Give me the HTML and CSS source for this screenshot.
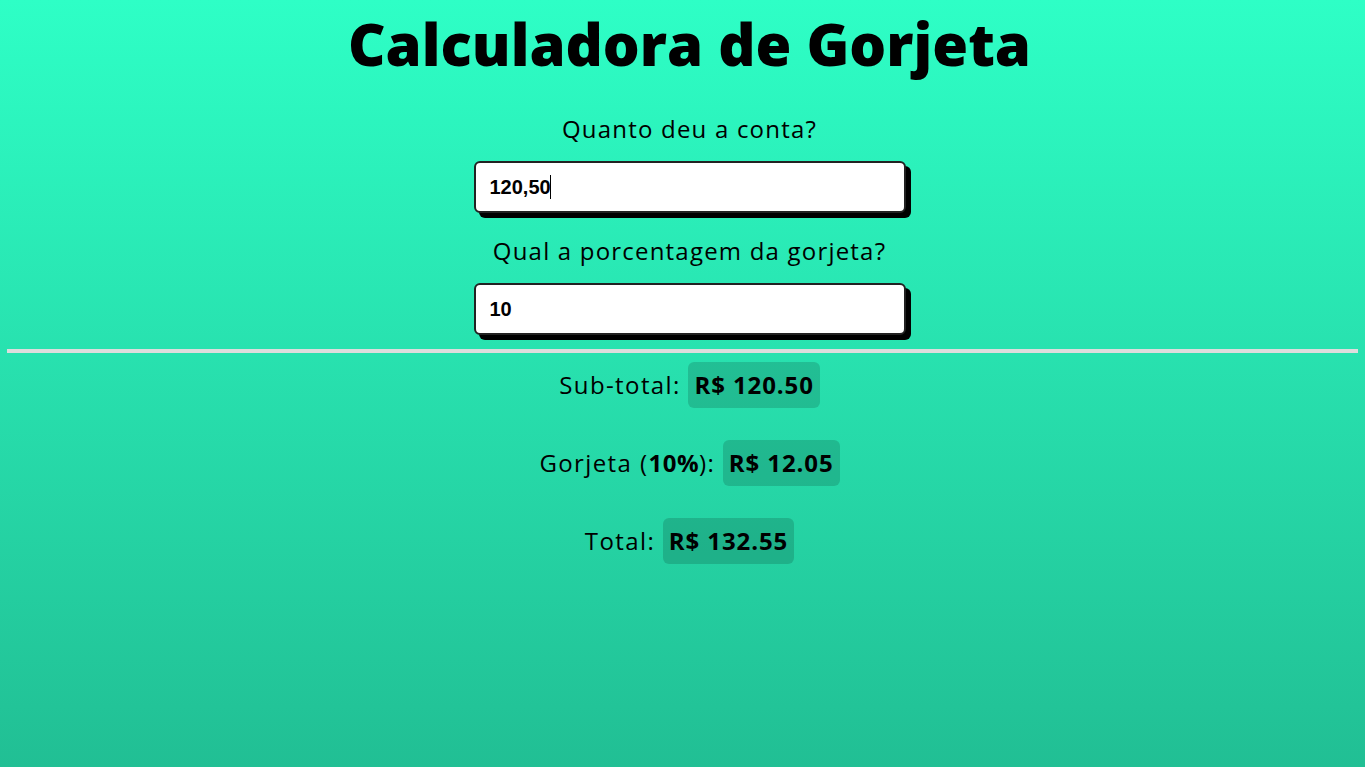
FILE: index.html
```html
<!DOCTYPE html>
<html lang="pt-BR">
<head>
<meta charset="utf-8">
<title>Calculadora de Gorjeta</title>
<link rel="stylesheet" href="styles.css">
</head>
<body>
<main class="app">
  <h1 class="title">Calculadora de Gorjeta</h1>
  <div class="form">
    <label class="label" for="conta">Quanto deu a conta?</label>
    <div class="field"><input class="input" id="conta" type="text" value="120,50"><span class="caret"></span></div>
    <label class="label" for="pct">Qual a porcentagem da gorjeta?</label>
    <div class="field"><input class="input" id="pct" type="text" value="10"></div>
  </div>
  <hr class="divider">
  <section class="results">
    <div class="row">Sub-total: <span class="value">R$ 120.50</span></div>
    <div class="row">Gorjeta (<b>10%</b>): <span class="value">R$ 12.05</span></div>
    <div class="row">Total: <span class="value">R$ 132.55</span></div>
  </section>
</main>
</body>
</html>
```
FILE: styles.css
```css
html, body {
  margin: 0;
  height: 100%;
}
body {
  background: linear-gradient(to bottom, #2effc6 0%, #21bf94 100%);
  font-family: "Open Sans", sans-serif;
  color: #000;
}
.app {
  display: flex;
  flex-direction: column;
  align-items: center;
  padding: 0 7px;
}
.title {
  margin: 8px 0 0 14px;
  font-size: 58px;
  font-weight: 800;
  line-height: 72px;
}
.form {
  display: flex;
  flex-direction: column;
  align-items: center;
  margin: 34px 0 0 14px;
}
.label {
  font-size: 24px;
  line-height: 30px;
  letter-spacing: 1.2px;
}
.field {
  position: relative;
  margin: 17px 0 23px;
}
.input {
  box-sizing: border-box;
  width: 432px;
  height: 52px;
  border: 2px solid #222;
  border-radius: 6px;
  box-shadow: 5px 5px 0 #000;
  background: #fff;
  padding: 0 14px;
  font-family: "Liberation Sans", Arial, sans-serif;
  font-weight: bold;
  font-size: 20px;
  color: #000;
  outline: none;
}
.caret {
  position: absolute;
  left: 76px;
  top: 14px;
  width: 1px;
  height: 24px;
  background: #000;
}
.divider {
  align-self: stretch;
  margin: -9px 0 0;
  height: 4px;
  border: 0;
  background: #ddd;
}
.results {
  display: flex;
  flex-direction: column;
  align-items: center;
  gap: 32px;
  margin: 9px 0 0 14px;
}
.row {
  font-size: 24px;
  line-height: 46px;
  letter-spacing: 1.4px;
  display: flex;
  align-items: center;
  white-space: pre;
}
.row b {
  font-weight: 700;
  letter-spacing: 0.5px;
}
.value {
  padding: 0 6px;
  border-radius: 6px;
  background: rgba(0, 0, 0, 0.15);
  font-weight: 700;
  letter-spacing: 0.9px;
  height: 46px;
  display: inline-flex;
  align-items: center;
}
```
